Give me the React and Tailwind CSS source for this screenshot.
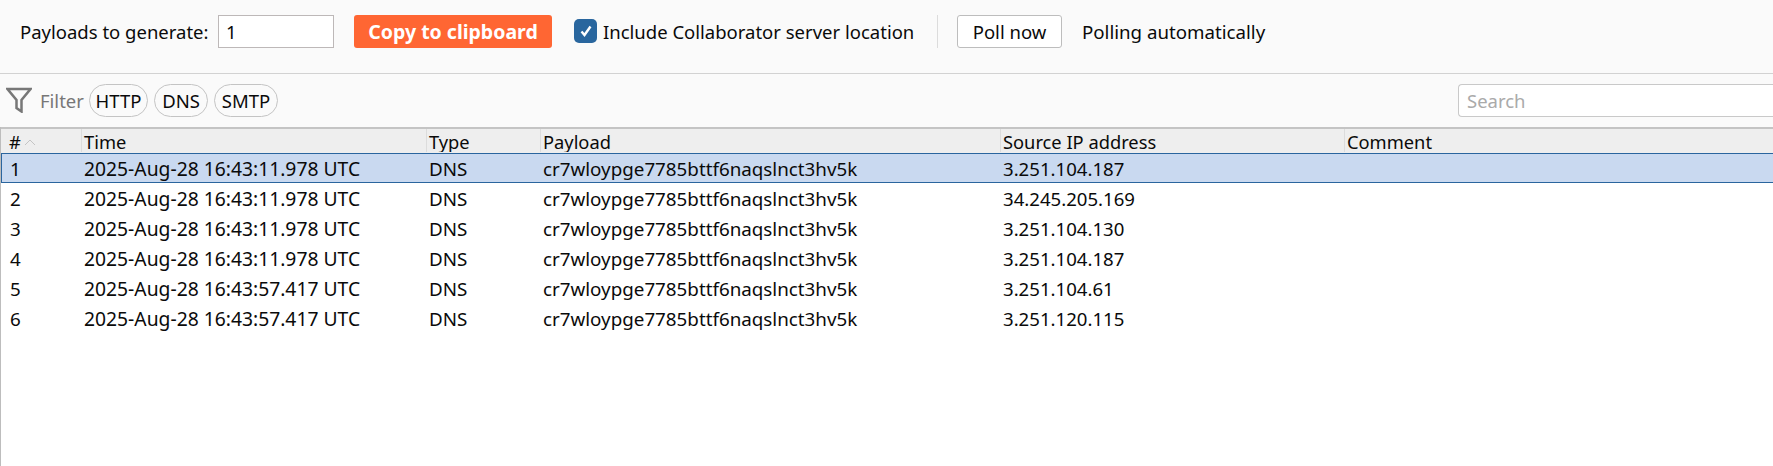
import React from "react";

const rows = [
  ["1", "2025-Aug-28 16:43:11.978 UTC", "3.251.104.187"],
  ["2", "2025-Aug-28 16:43:11.978 UTC", "34.245.205.169"],
  ["3", "2025-Aug-28 16:43:11.978 UTC", "3.251.104.130"],
  ["4", "2025-Aug-28 16:43:11.978 UTC", "3.251.104.187"],
  ["5", "2025-Aug-28 16:43:57.417 UTC", "3.251.104.61"],
  ["6", "2025-Aug-28 16:43:57.417 UTC", "3.251.120.115"],
];

const payload = "cr7wloypge7785bttf6naqslnct3hv5k";
const columns = "grid grid-cols-[80px_345px_114px_460px_344px_1fr]";

const Pill = ({ label, width }) => (
  <button className={`h-[33px] ${width} rounded-[17px] border border-[#c4c4c4] bg-[#fafafa] pt-px`}>
    {label}
  </button>
);

// the header text is clipped at the bottom in the original too
const HeaderCell = ({ children }) => (
  <div className="h-[23px] overflow-hidden border-l border-[#dcdcdc] pl-[2px] text-[18.3px] leading-[26px] first:border-l-0 first:pl-2">
    {children}
  </div>
);

const App = () => {
  return (
    <div className="flex h-[466px] w-[1773px] flex-col overflow-hidden bg-white font-['Noto_Sans',sans-serif] text-[18.5px] text-[#0a0a0a]">
      {/* top toolbar */}
      <div className="flex h-[74px] shrink-0 items-start border-b border-[#d2d2d2] bg-[#fafafa] pt-[15px]">
        <span className="ml-5 w-[198px] leading-[33px]">Payloads to generate:</span>
        <input
          readOnly
          value="1"
          className="h-[33px] w-[116px] border border-[#bdb8b8] bg-white pl-[7px] outline-none"
        />
        <button className="ml-5 h-[33px] w-[198px] rounded-[3px] bg-[#ff6633] text-[19.5px] font-bold text-white">
          Copy to clipboard
        </button>
        <div className="ml-[22px] mt-1 flex h-6 w-[23px] items-center justify-center rounded-[5px] bg-[#29669e]">
          <svg width="14" height="14" viewBox="0 0 14 14" fill="none">
            <path d="M2.5 7.5 L5.5 11 L11.5 2.5" stroke="white" strokeWidth="2.4" />
          </svg>
        </div>
        <span className="ml-[6px] w-[334px] leading-[33px]">Include Collaborator server location</span>
        <div className="h-[33px] w-px bg-[#dcdcdc]" />
        <button className="ml-[19px] h-[33px] w-[105px] rounded-[3px] border border-[#bdbdbd] bg-white">
          Poll now
        </button>
        <span className="ml-5 text-[18.7px] leading-[33px]">Polling automatically</span>
      </div>

      {/* filter bar */}
      <div className="flex h-[53px] shrink-0 items-center bg-[#fafafa] pb-px">
        <svg className="ml-[6px]" width="26" height="26" viewBox="0 0 26 26" fill="none">
          <path d="M1.5 2 H24.5 L15.5 13 V24.5 L10.5 21 V13 Z" stroke="#777" strokeWidth="2.5" />
        </svg>
        <span className="ml-2 w-[49px] pt-px text-[#777]">Filter</span>
        <div className="flex gap-[6px]">
          <Pill label="HTTP" width="w-[59px]" />
          <Pill label="DNS" width="w-[54px]" />
          <Pill label="SMTP" width="w-[64px]" />
        </div>
        <input
          readOnly
          placeholder="Search"
          className="ml-auto h-[33px] w-[315px] rounded-l-[4px] border border-r-0 border-[#c9c9c9] bg-white pl-[8px] pt-px outline-none placeholder:text-[#aaa]"
        />
      </div>

      {/* log table */}
      <div className="flex-1 border-l border-[#bdbdbd]">
        <div className={`${columns} h-[26px] border-t-2 border-[#c4c4c4] bg-[#eeeeee]`}>
          <HeaderCell>
            <span className="flex items-center gap-[3px]">
              #
              <svg width="12" height="7" viewBox="0 0 12 7" fill="none">
                <path d="M1 6 L6 1 L11 6" stroke="#c4c4c4" />
              </svg>
            </span>
          </HeaderCell>
          <HeaderCell>Time</HeaderCell>
          <HeaderCell>Type</HeaderCell>
          <HeaderCell>Payload</HeaderCell>
          <HeaderCell>Source IP address</HeaderCell>
          <HeaderCell>Comment</HeaderCell>
        </div>
        {rows.map(([id, time, ip], i) => (
          <div
            key={id}
            className={`${columns} h-[30px] text-[18.8px] leading-[30px] ${
              i === 0 ? "border-y border-l border-[#2a659e] bg-[#c9d9f0]" : "border-y border-l border-transparent"
            }`}
          >
            <div className="pl-2">{id}</div>
            <div className="pl-[2px] text-[19.3px]">{time}</div>
            <div className="pl-[2px]">DNS</div>
            <div className="pl-[2px]">{payload}</div>
            <div className="pl-[2px] text-[18.6px]">{ip}</div>
            <div />
          </div>
        ))}
      </div>
    </div>
  );
};

export default App;
